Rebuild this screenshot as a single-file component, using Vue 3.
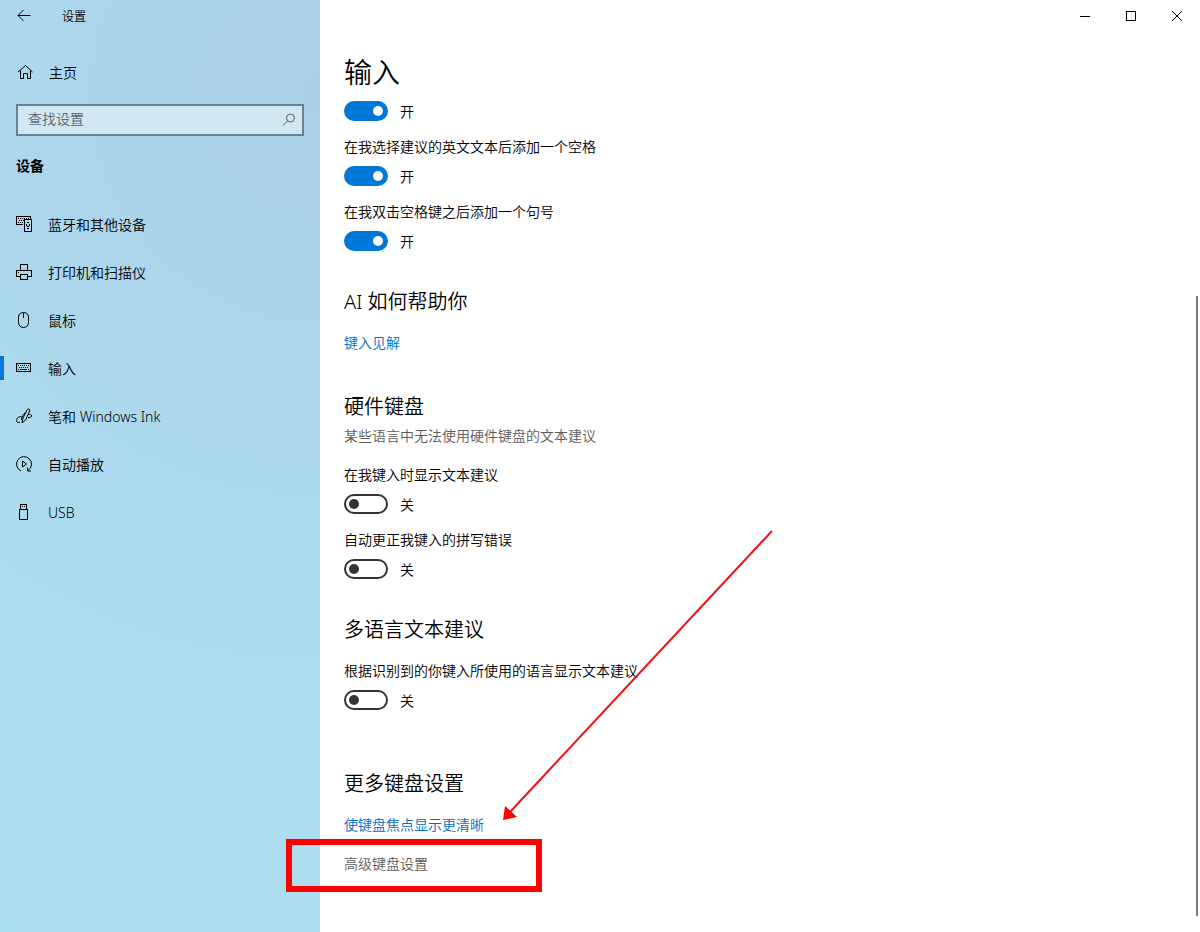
<template>
  <div class="window">
    <!-- 左侧导航 -->
    <aside class="sidebar">
      <header class="title-bar">
        <button class="back" aria-label="返回">
          <svg width="16" height="16" viewBox="0 0 16 16"><path d="M2 7.5h12.5M7.5 2L2 7.5L7.5 13" /></svg>
        </button>
        <span class="app-name">设置</span>
      </header>
      <a href="#" class="home">
        <svg width="16" height="16" viewBox="0 0 16 16"><path d="M1 8L8.500 1.500L15.500 8M3.500 6.500V14.500H6.500V9.500H10.500V14.500H13.500V6.500" /></svg>
        <span>主页</span>
      </a>
      <div class="search">
        <input type="text" v-model="keyword" placeholder="查找设置" aria-label="查找设置">
        <svg width="14" height="14" viewBox="0 0 14 14"><circle cx="8.500" cy="5" r="4" /><path d="M5.500 8L1 12.500" /></svg>
      </div>
      <h2 class="category">设备</h2>
      <nav>
        <a v-for="item in menus" :key="item.name" href="#" class="menu" :class="{ active: item.name == current }" @click.prevent="current = item.name">
          <svg width="16" height="16" viewBox="0 0 16 16">
            <path :d="item.path" :class="{ crisp: item.crisp }" />
            <path v-if="item.dots" :d="item.dots" class="crisp dots" />
          </svg>
          <span>{{ item.name }}</span>
        </a>
      </nav>
    </aside>

    <!-- 右侧内容 -->
    <main class="content">
      <div class="controls">
        <button aria-label="最小化"><svg width="12" height="12" viewBox="0 0 12 12"><path class="crisp" d="M1 6.500H11" /></svg></button>
        <button aria-label="最大化"><svg width="12" height="12" viewBox="0 0 12 12"><path class="crisp" d="M1.500 1.500H10.500V10.500H1.500Z" /></svg></button>
        <button aria-label="关闭"><svg width="12" height="12" viewBox="0 0 12 12"><path d="M1 1L11 11M11 1L1 11" /></svg></button>
      </div>
      <div class="page">
        <h1>输入</h1>
        <section v-for="group in groups" :key="group.id" :class="group.id">
          <h2 v-if="group.title">{{ group.title }}</h2>
          <p v-if="group.desc" class="desc">{{ group.desc }}</p>
          <div v-for="(row, i) in group.rows" :key="i" class="setting">
            <label v-if="row.label" :for="group.id + i">{{ row.label }}</label>
            <div class="toggle">
              <input type="checkbox" role="switch" :id="group.id + i" v-model="row.on" :aria-label="row.label ? null : '输入'">
              <span>{{ row.on ? '开' : '关' }}</span>
            </div>
          </div>
          <a v-if="group.link" href="#" class="link">{{ group.link }}</a>
          <div v-if="group.advanced" class="advanced">
            <a href="#">{{ group.advanced }}</a>
            <!-- 红框和箭头标注 -->
            <svg class="mark" width="490" height="364" viewBox="0 0 490 364">
              <rect x="3" y="312" width="250" height="47" />
              <path class="line" d="M486 1L224 282" />
              <path class="head" d="M217 290L219 276L231 287Z" />
            </svg>
          </div>
        </section>
      </div>
      <div class="scroll-thumb"></div>
    </main>
  </div>
</template>

<script setup>
import { ref } from 'vue';

const keyword = ref('');
const current = ref('输入');

// 菜单
const menus = [
  {
    name: '蓝牙和其他设备',
    crisp: true,
    path: 'M7 8.500H.5V.5H14.500V3M8.500 3.500H15.500V15.500H8.500ZM11 6.500H13M10.500 8V10M13.500 8V10M11 10.500H13M11 12.500H13',
    dots: 'M2 2.500H13M3 4.500H8M2 6.500H7',
  },
  {
    name: '打印机和扫描仪',
    crisp: true,
    path: 'M4.500 6V.5H11.500V6M4 12.500H.5V6.500H15.500V12.500H12M4.500 10.500H11.500V15.500H4.500Z',
    dots: 'M2 8.500H3',
  },
  {
    name: '鼠标',
    path: 'M7.500 .5C4.500 .5 2.500 2 2.500 5V10.500C2.500 13.500 4.500 15.500 7.500 15.500C10.500 15.500 12.500 13.500 12.500 10.500V5C12.500 2 10.500 .5 7.500 .5ZM7.500 1V6',
  },
  {
    name: '输入',
    crisp: true,
    path: 'M.5 3.500H14.500V11.500H.5ZM4 9.500H11',
    dots: 'M2 5.500H13M3 7.500H13M2 9.500H3M12 9.500H13',
  },
  {
    name: '笔和 Windows Ink',
    path: 'M6 15L7 10L11 2C12 .2 14.500 1 13.500 3L10 11.500L6 15ZM9.500 4.500C7 6.500 5.500 8.500 5.500 12M6 9C3 8 .5 10 .5 12.500C.5 14.500 2.500 15 4 14M12.500 6.500C14 6 15.500 6.500 15.500 8C15.500 9.500 13.500 10 12 9.500',
  },
  {
    name: '自动播放',
    path: 'M5 15A7.500 7.500 0 1 1 12 14.500M6.500 5V11L10.500 8ZM11.500 11.500V15H15',
  },
  {
    name: 'USB',
    crisp: true,
    path: 'M3.500 5.500H11.500V15.500H3.500ZM4.500 5V.5H10.500V5',
    dots: 'M6 2.500H7M8 2.500H9',
  },
];

// 设置项
const groups = ref([
  {
    id: 'typing',
    rows: [
      { label: '', on: true },
      { label: '在我选择建议的英文文本后添加一个空格', on: true },
      { label: '在我双击空格键之后添加一个句号', on: true },
    ],
  },
  { id: 'insights', title: 'AI 如何帮助你', link: '键入见解' },
  {
    id: 'hardware',
    title: '硬件键盘',
    desc: '某些语言中无法使用硬件键盘的文本建议',
    rows: [
      { label: '在我键入时显示文本建议', on: false },
      { label: '自动更正我键入的拼写错误', on: false },
    ],
  },
  {
    id: 'multilingual',
    title: '多语言文本建议',
    rows: [{ label: '根据识别到的你键入所使用的语言显示文本建议', on: false }],
  },
  { id: 'more', title: '更多键盘设置', link: '使键盘焦点显示更清晰', advanced: '高级键盘设置' },
]);
</script>

<style>
body {
  background: #fff;
}
</style>

<style scoped>
.window {
  display: grid;
  grid-template-columns: 320px 1fr;
  min-height: 100vh;
  font-family: "Noto Sans", "Noto Sans CJK SC", sans-serif;
  font-size: 14px;
  font-weight: 350;
  line-height: 20px;
  color: #000;
}

h1, h2, p {
  margin: 0;
  font-weight: 350;
}

a {
  color: inherit;
  text-decoration: none;
}

button {
  display: flex;
  align-items: center;
  justify-content: center;
  padding: 0;
  border: 0;
  background: none;
}

svg {
  display: block;
  flex-shrink: 0;
  fill: none;
  stroke: #000;
}

.crisp {
  shape-rendering: crispEdges;
}

.dots {
  stroke-dasharray: 1 1;
}

/* 左侧 */
.sidebar {
  background: radial-gradient(circle at 100% 10%, #acd2ea 0%, #acd6ec 30%, #acdcee 65%, #acddef 100%);
}

.title-bar {
  display: flex;
  align-items: center;
  height: 32px;
}

.back {
  width: 48px;
  height: 32px;
}

.app-name {
  margin-left: 14px;
  font-size: 12px;
}

.home {
  display: flex;
  align-items: center;
  gap: 16px;
  height: 40px;
  margin-top: 20px;
  padding: 0 17px;
}

.sidebar span, .toggle span {
  padding-top: 2px;
}

.search {
  display: flex;
  align-items: center;
  height: 28px;
  margin: 12px 16px 0;
  padding: 0 6px 0 10px;
  border: 2px solid #688490;
  background: rgba(255, 255, 255, 0.45);
}

.search input {
  flex: 1;
  min-width: 0;
  padding: 0 0 2px;
  border: 0;
  outline: none;
  background: none;
  font: inherit;
}

.search input::placeholder {
  color: #56666f;
  opacity: 1;
}

.search svg {
  stroke: #56666f;
}

.category {
  margin: 20px 16px 24px;
  font-size: 14px;
  font-weight: 700;
}

.menu {
  display: flex;
  align-items: center;
  gap: 16px;
  height: 48px;
  padding: 0 16px;
}

.active {
  background: linear-gradient(#0078d7, #0078d7) no-repeat 0 50% / 4px 24px;
}

/* 右侧 */
.content {
  position: relative;
}

.controls {
  display: flex;
  justify-content: flex-end;
}

.controls button {
  width: 46px;
  height: 32px;
}

.page {
  padding: 20px 24px 40px;
}

h1 {
  margin-bottom: 9px;
  font-size: 28px;
  line-height: 40px;
}

.page h2 {
  margin-bottom: 17px;
  font-size: 20px;
  line-height: 28px;
}

.insights, .multilingual {
  margin-top: 37px;
}

.hardware {
  margin-top: 40px;
}

.more {
  margin-top: 60px;
}

.page .hardware h2 {
  margin-bottom: 5px;
}

.desc {
  margin-bottom: 19px;
  color: #5c5c5c;
}

.setting + .setting {
  margin-top: 16px;
}

.setting label {
  display: block;
  margin-bottom: 9px;
}

.toggle {
  display: flex;
  align-items: center;
  gap: 12px;
  height: 20px;
}

.toggle input {
  appearance: none;
  display: flex;
  align-items: center;
  box-sizing: border-box;
  width: 44px;
  height: 20px;
  margin: 0;
  padding: 0 3px;
  border: 2px solid #333;
  border-radius: 10px;
}

.toggle input::before {
  content: "";
  width: 10px;
  height: 10px;
  border-radius: 50%;
  background: #333;
}

.toggle input:checked {
  justify-content: flex-end;
  border-color: #0078d7;
  background: #0078d7;
}

.toggle input:checked::before {
  background: #fff;
}

.link {
  display: block;
  color: #006cc4;
}

.advanced {
  position: relative;
  margin-top: 19px;
  color: #5c5c5c;
}

.mark {
  position: absolute;
  left: -58px;
  bottom: -20px;
  z-index: 1;
  pointer-events: none;
}

.mark rect {
  stroke: #fe0000;
  stroke-width: 6px;
}

.mark .line {
  stroke: #f01010;
  stroke-width: 2px;
}

.mark .head {
  fill: #fe0000;
  stroke: none;
}

.scroll-thumb {
  position: absolute;
  top: 296px;
  right: 2px;
  bottom: 16px;
  width: 2px;
  background: #7a7a7a;
}
</style>
